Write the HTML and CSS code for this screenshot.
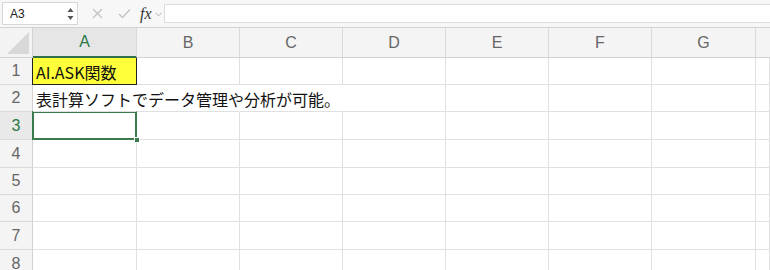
FILE: index.html
```html
<!DOCTYPE html>
<html lang="ja">
<head>
<meta charset="utf-8">
<link rel="stylesheet" href="styles.css">
</head>
<body>
<div class="app">
  <div class="formula-bar">
    <div class="name-box">
      <span class="name-text">A3</span>
      <span class="spinner">
        <svg width="7" height="14" viewBox="0 0 7 14"><polygon points="3.5,1 6.5,5 0.5,5" fill="#555"/><polygon points="0.5,9 6.5,9 3.5,13" fill="#555"/></svg>
      </span>
    </div>
    <div class="fb-icons">
      <svg class="fb-x" width="11" height="11" viewBox="0 0 11 11"><path d="M1 1 L10 10 M10 1 L1 10" stroke="#c4c4c4" stroke-width="1.4" fill="none"/></svg>
      <svg class="fb-check" width="13" height="11" viewBox="0 0 13 11"><path d="M1 6 L4.5 9.5 L12 1.5" stroke="#c4c4c4" stroke-width="1.4" fill="none"/></svg>
      <span class="fx">fx</span>
      <svg class="fb-chev" width="7" height="5" viewBox="0 0 7 5"><path d="M0.5 0.8 L3.5 4 L6.5 0.8" stroke="#b5b5b5" stroke-width="1" fill="none"/></svg>
    </div>
    <div class="formula-input"></div>
  </div>

  <div class="sheet">
    <div class="corner"><svg width="24" height="24" viewBox="0 0 24 24"><polygon points="23,1 23,23 1,23" fill="#d8d8d8"/></svg></div>
    <div class="col-h sel">A</div>
    <div class="col-h">B</div>
    <div class="col-h">C</div>
    <div class="col-h">D</div>
    <div class="col-h">E</div>
    <div class="col-h">F</div>
    <div class="col-h">G</div>
    <div class="col-h last"></div>

    <div class="row-h">1</div>
    <div class="cell yellow">AI.ASK関数</div>
    <div class="cell"></div><div class="cell"></div><div class="cell"></div><div class="cell"></div><div class="cell"></div><div class="cell"></div><div class="cell"></div>

    <div class="row-h">2</div>
    <div class="cell noright overflow">表計算ソフトでデータ管理や分析が可能。</div>
    <div class="cell noright"></div><div class="cell noright"></div><div class="cell"></div><div class="cell"></div><div class="cell"></div><div class="cell"></div><div class="cell"></div>

    <div class="row-h sel">3</div>
    <div class="cell active"><span class="handle"></span></div>
    <div class="cell"></div><div class="cell"></div><div class="cell"></div><div class="cell"></div><div class="cell"></div><div class="cell"></div><div class="cell"></div>

    <div class="row-h">4</div>
    <div class="cell"></div><div class="cell"></div><div class="cell"></div><div class="cell"></div><div class="cell"></div><div class="cell"></div><div class="cell"></div><div class="cell"></div>

    <div class="row-h">5</div>
    <div class="cell"></div><div class="cell"></div><div class="cell"></div><div class="cell"></div><div class="cell"></div><div class="cell"></div><div class="cell"></div><div class="cell"></div>

    <div class="row-h">6</div>
    <div class="cell"></div><div class="cell"></div><div class="cell"></div><div class="cell"></div><div class="cell"></div><div class="cell"></div><div class="cell"></div><div class="cell"></div>

    <div class="row-h">7</div>
    <div class="cell"></div><div class="cell"></div><div class="cell"></div><div class="cell"></div><div class="cell"></div><div class="cell"></div><div class="cell"></div><div class="cell"></div>

    <div class="row-h">8</div>
    <div class="cell"></div><div class="cell"></div><div class="cell"></div><div class="cell"></div><div class="cell"></div><div class="cell"></div><div class="cell"></div><div class="cell"></div>
  </div>
</div>
</body>
</html>
```

FILE: styles.css
```css
* { box-sizing: border-box; }
html, body { margin: 0; padding: 0; background: #fff; }
body {
  width: 770px;
  height: 270px;
  overflow: hidden;
  font-family: "Liberation Sans", "Noto Sans CJK JP", sans-serif;
}
.app { width: 770px; }

.formula-bar {
  height: 28px;
  background: #f7f7f7;
  border-bottom: 1px solid #d2d2d2;
  display: flex;
  align-items: center;
  padding-left: 2px;
}
.name-box {
  width: 76px;
  height: 23px;
  background: #fff;
  border: 1px solid #d6d6d6;
  display: flex;
  align-items: center;
  justify-content: space-between;
  padding: 0 3px 0 7px;
}
.name-text {
  font-size: 12px;
  color: #222;
  font-family: "Liberation Sans", sans-serif;
}
.spinner { display: flex; align-items: center; }
.spinner svg { display: block; }

.fb-icons {
  display: flex;
  align-items: center;
  width: 86px;
  padding-left: 14px;
}
.fb-x { margin-right: 15px; }
.fb-check { margin-right: 9px; }
.fx {
  font-family: "Liberation Serif", "DejaVu Serif", serif;
  font-style: italic;
  font-size: 16px;
  color: #333;
  line-height: 1;
  margin-right: 3px;
}
.fb-chev { margin-top: 2px; }
.formula-input {
  flex: 1;
  height: 19px;
  background: #fff;
  border: 1px solid #dcdcdc;
  border-right: none;
}

.sheet {
  display: grid;
  grid-template-columns: 33px 104px 103px 103px 103px 103px 103px 104px 1fr;
  grid-template-rows: 30px 27px 27px 28px 28px 27px 27px 28px 28px;
}
.corner {
  background: #f3f3f3;
  border-right: 1px solid #d2d2d2;
  border-bottom: 1px solid #d2d2d2;
  display: flex;
  align-items: flex-end;
  justify-content: flex-end;
  padding: 0 2px 2px 0;
}
.corner svg { display: block; }
.col-h {
  background: #f4f4f4;
  border-right: 1px solid #dadada;
  border-bottom: 1px solid #d2d2d2;
  display: flex;
  align-items: center;
  justify-content: center;
  font-size: 16px;
  color: #666;
  font-family: "Liberation Sans", sans-serif;
}
.col-h.sel {
  background: #e6e6e6;
  color: #2a7a45;
  border-bottom: 2px solid #2f7148;
}
.col-h.last { border-right: none; }

.row-h {
  background: #f4f4f4;
  border-right: 1px solid #d2d2d2;
  border-bottom: 1px solid #dadada;
  display: flex;
  align-items: center;
  justify-content: center;
  font-size: 16px;
  color: #666;
  font-family: "Liberation Sans", sans-serif;
}
.row-h.sel { background: #e9e9e9; color: #2a7a45; }

.cell {
  border-right: 1px solid #e0e0e0;
  border-bottom: 1px solid #e0e0e0;
  display: flex;
  align-items: center;
  padding: 1px 0 0 3px;
  font-family: "Noto Sans CJK JP", sans-serif;
  font-size: 16px;
  color: #111;
  white-space: nowrap;
  position: relative;
}
.cell.noright { border-right-color: transparent; }
.cell.overflow { overflow: visible; z-index: 1; }
.cell.yellow {
  background: #ffff3a;
  border: 1px solid #222;
  border-top: none;
  border-left: none;
  box-shadow: -1px 0 0 #222;
}
.cell.active::after {
  content: "";
  position: absolute;
  left: -1px;
  top: -1px;
  right: -1px;
  bottom: -1px;
  border: 2px solid #3b7a4c;
}
.handle {
  position: absolute;
  right: -4px;
  bottom: -4px;
  width: 6px;
  height: 6px;
  background: #3b7a4c;
  border: 1px solid #fff;
  z-index: 2;
}
```
